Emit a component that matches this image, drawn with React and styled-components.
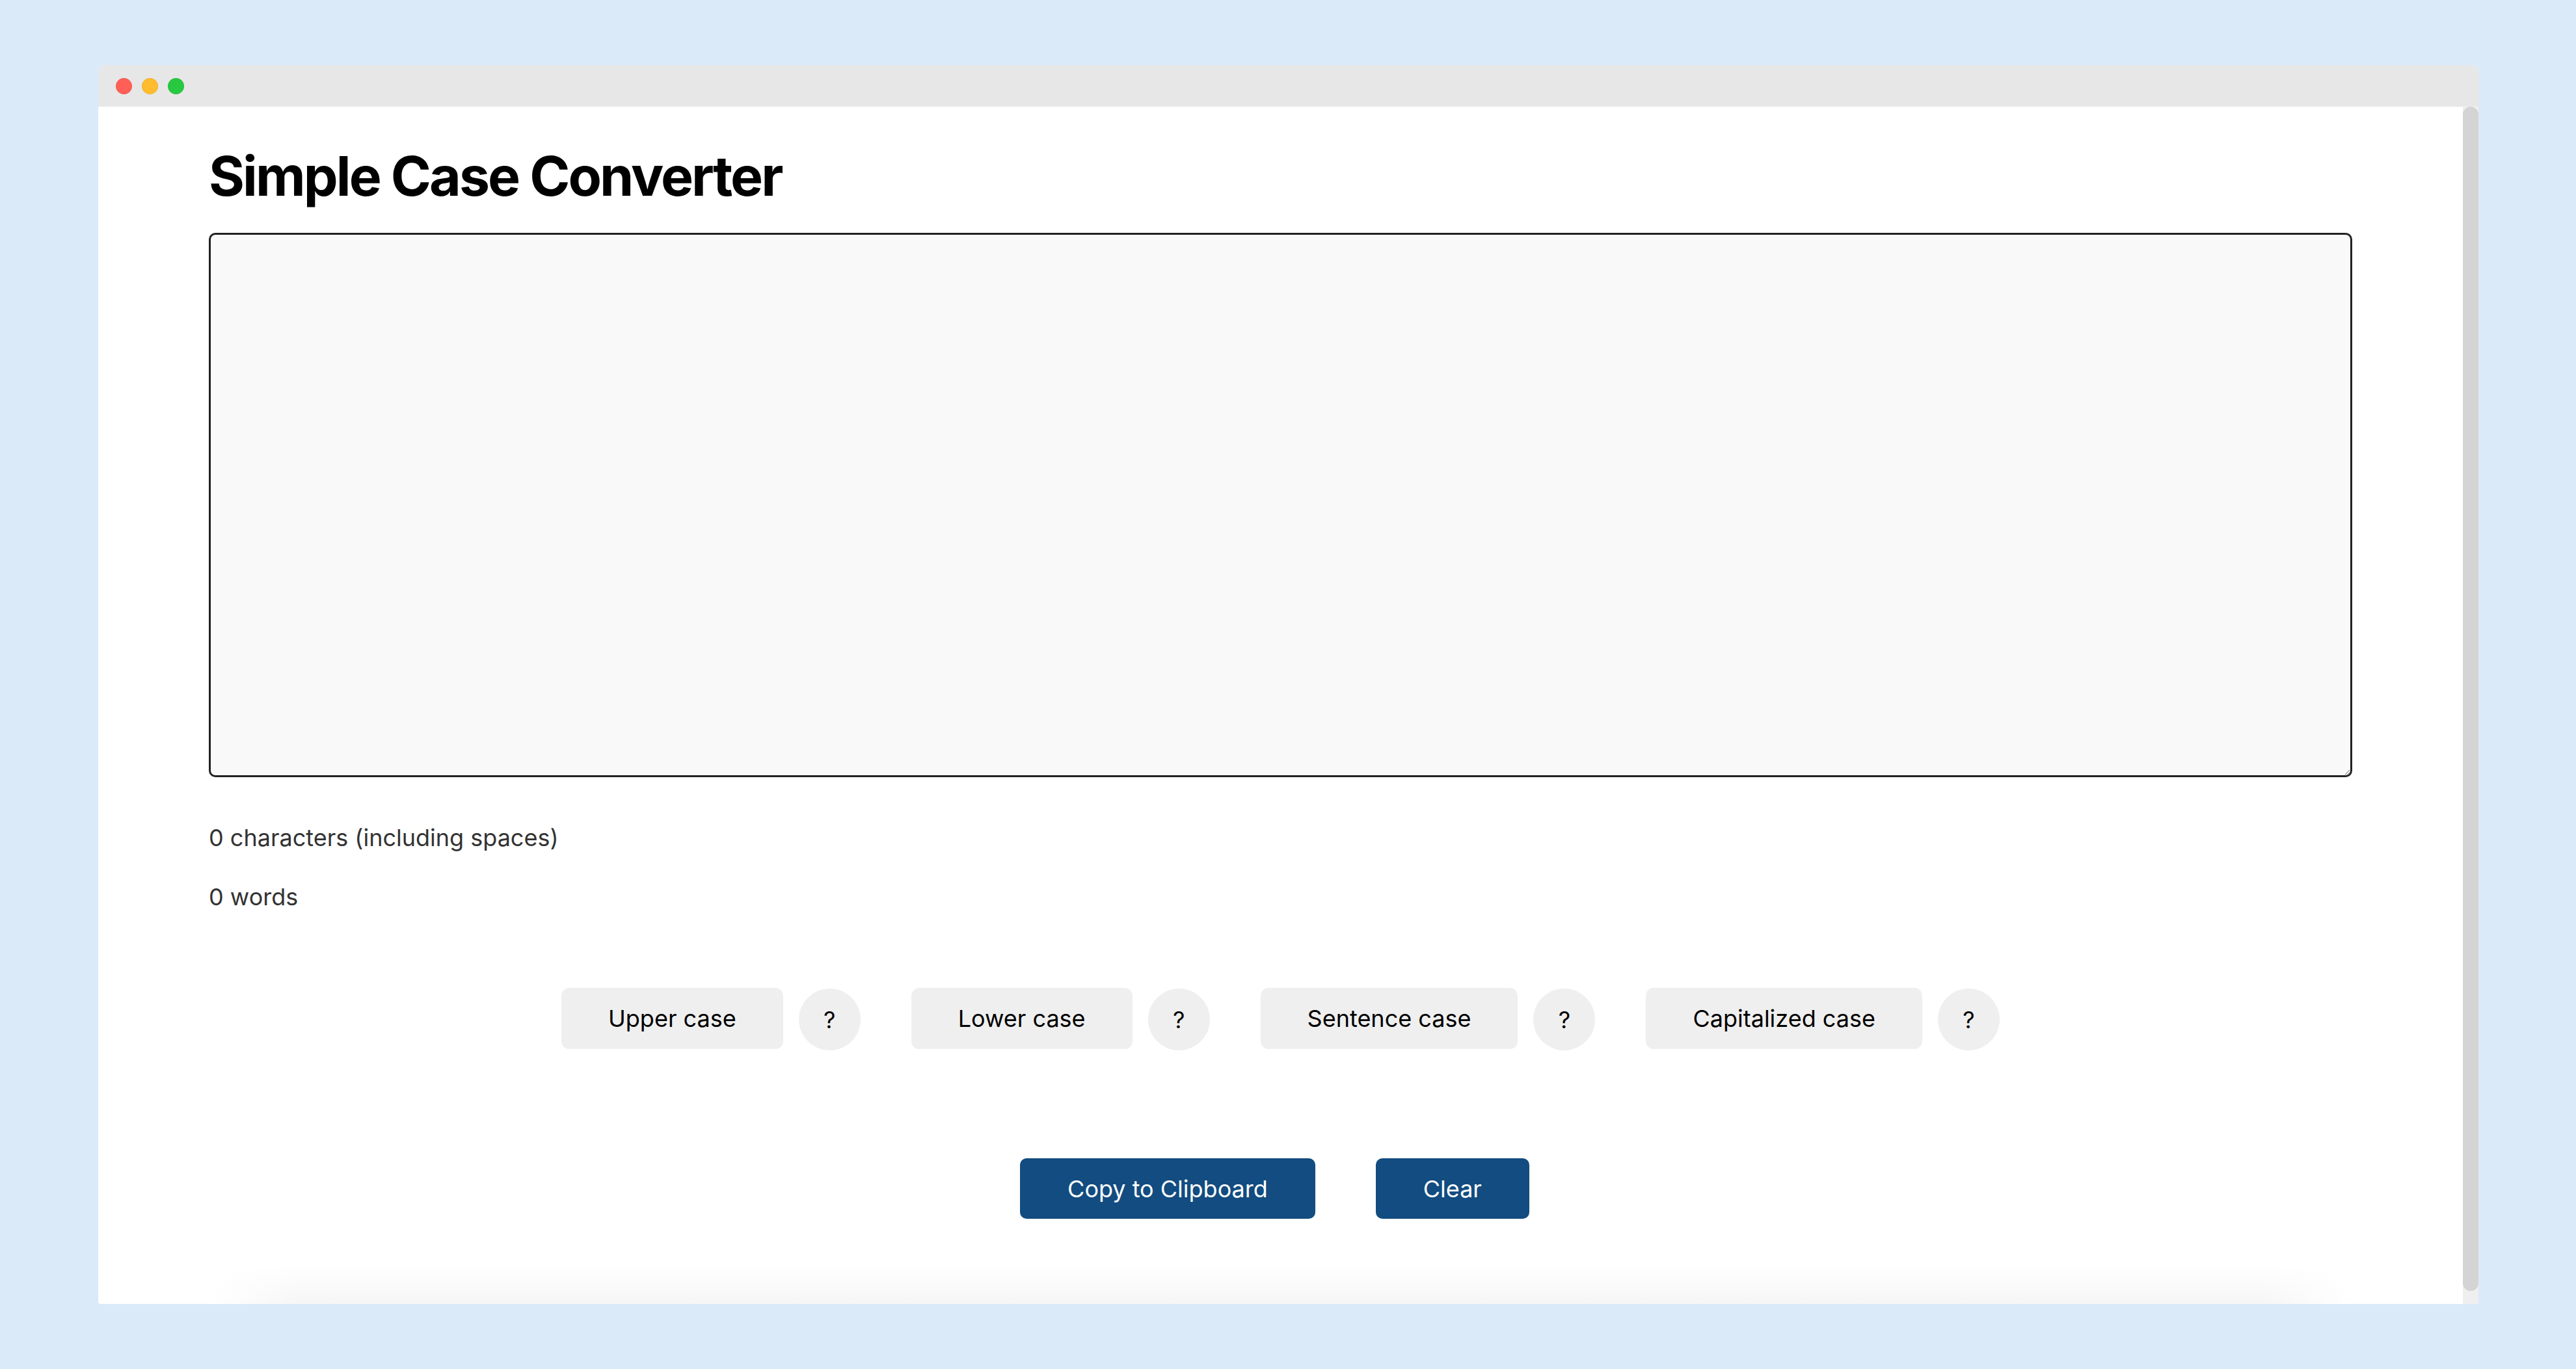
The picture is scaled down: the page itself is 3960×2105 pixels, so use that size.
import styled, { createGlobalStyle } from "styled-components"

const GlobalStyle = createGlobalStyle`
  html, body {
    margin: 0;
    padding: 0;
    background: #dbeaf8;
  }
  * {
    box-sizing: border-box;
  }
`

const Page = styled.div`
  height: 2105px;
  padding: 100px 150px 100px 151px;
  font-family: Inter, "Liberation Sans", sans-serif;
`

const Window = styled.div`
  height: 100%;
  display: flex;
  flex-direction: column;
  background: #ffffff;
  border-radius: 12px 12px 4px 4px;
  overflow: hidden;
`

const TitleBar = styled.div`
  height: 64px;
  flex-shrink: 0;
  display: flex;
  align-items: center;
  gap: 15px;
  padding-left: 27px;
  background: #e7e7e7;
`

const Dot = styled.span`
  width: 25px;
  height: 25px;
  border-radius: 50%;
  background: ${(p) => p.color};
  box-shadow: inset 0 0 0 1px rgba(0, 0, 0, 0.06);
`

const Body = styled.div`
  flex: 1;
  display: flex;
  min-height: 0;
`

const Content = styled.main`
  flex: 1;
  display: flex;
  flex-direction: column;
  padding: 0 170px;
`

const Scrollbar = styled.div`
  width: 24px;
  flex-shrink: 0;
  display: flex;
  flex-direction: column;
  background: #efefef;
  padding-bottom: 20px;
`

const Thumb = styled.div`
  flex: 1;
  border-radius: 12px;
  background: #d4d4d4;
`

const Title = styled.h1`
  margin: 65px 0 0;
  font-size: 84px;
  font-weight: 700;
  line-height: 1;
  letter-spacing: -2.9px;
  color: #000;
`

const TextBox = styled.textarea`
  display: block;
  width: 100%;
  height: 837px;
  margin-top: 45px;
  border: 3px solid #222;
  border-radius: 10px;
  background: #f9f9f9;
  font-family: inherit;
  font-size: 36px;
  padding: 20px;
  outline: none;
`

const Stat = styled.p`
  margin: ${(p) => p.$top}px 0 0;
  font-size: 36px;
  line-height: 1;
  color: #333;
`

const CaseRow = styled.div`
  display: flex;
  justify-content: center;
  gap: 78px;
  margin-top: 119px;
`

const CaseGroup = styled.div`
  display: flex;
  align-items: center;
  gap: 24px;
`

const CaseButton = styled.button`
  height: 94px;
  padding: 0 72px;
  border: none;
  border-radius: 12px;
  background: #efefef;
  font-family: inherit;
  font-size: 36px;
  color: #000;
`

const HelpButton = styled.button`
  width: 95px;
  height: 95px;
  margin-top: 4px;
  border: none;
  border-radius: 50%;
  background: #efefef;
  font-family: inherit;
  font-size: 36px;
  color: #000;
`

const ActionRow = styled.div`
  display: flex;
  justify-content: center;
  gap: 93px;
  margin-top: 166px;
  padding-right: 18px;
`

const ActionButton = styled.button`
  height: 93px;
  padding: 0 73px;
  border: none;
  border-radius: 10px;
  background: #124c80;
  font-family: inherit;
  font-size: 36px;
  color: #fff;
`

const Fade = styled.div`
  height: 60px;
  margin-top: auto;
  background: linear-gradient(to bottom, rgba(247, 247, 247, 0), #f6f6f6);
  mask-image: linear-gradient(to right, transparent, #000 4%, #000 96%, transparent);
`

const cases = ["Upper case", "Lower case", "Sentence case", "Capitalized case"]

const App = () => {
  return (
    <>
      <GlobalStyle />
      <Page>
        <Window>
          <TitleBar>
            <Dot color="#ff5f57" />
            <Dot color="#febc2e" />
            <Dot color="#28c840" />
          </TitleBar>
          <Body>
            <Content>
              <Title>Simple Case Converter</Title>
              <TextBox />
              <Stat $top={75}>0 characters (including spaces)</Stat>
              <Stat $top={55}>0 words</Stat>
              <CaseRow>
                {cases.map((label) => (
                  <CaseGroup key={label}>
                    <CaseButton>{label}</CaseButton>
                    <HelpButton>?</HelpButton>
                  </CaseGroup>
                ))}
              </CaseRow>
              <ActionRow>
                <ActionButton>Copy to Clipboard</ActionButton>
                <ActionButton>Clear</ActionButton>
              </ActionRow>
              <Fade />
            </Content>
            <Scrollbar>
              <Thumb />
            </Scrollbar>
          </Body>
        </Window>
      </Page>
    </>
  )
}

export default App
